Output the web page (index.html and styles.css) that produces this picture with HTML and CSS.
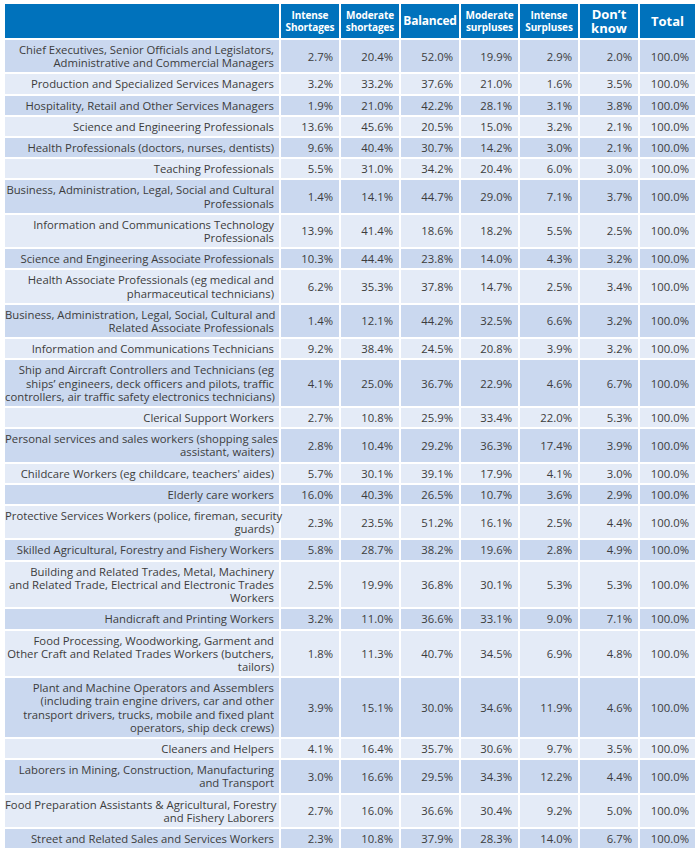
FILE: index.html
```html
<!DOCTYPE html>
<html>
<head>
<meta charset="utf-8">
<link rel="stylesheet" href="styles.css">
</head>
<body>
<table class="grid">
<colgroup>
<col class="c-label"><col class="c58"><col class="c58"><col class="c58"><col class="c57"><col class="c58"><col class="c58"><col class="c55">
</colgroup>
<thead>
<tr>
<th></th>
<th class="small">Intense<br>Shortages</th>
<th class="small">Moderate<br>shortages</th>
<th class="mid">Balanced</th>
<th class="small">Moderate<br>surpluses</th>
<th class="small">Intense<br>Surpluses</th>
<th class="big">Don’t<br>know</th>
<th class="big">Total</th>
</tr>
</thead>
<tbody>
<tr><td>Chief Executives, Senior Officials and Legislators,<br>Administrative and Commercial Managers</td><td>2.7%</td><td>20.4%</td><td>52.0%</td><td>19.9%</td><td>2.9%</td><td>2.0%</td><td>100.0%</td></tr>
<tr><td>Production and Specialized Services Managers</td><td>3.2%</td><td>33.2%</td><td>37.6%</td><td>21.0%</td><td>1.6%</td><td>3.5%</td><td>100.0%</td></tr>
<tr><td>Hospitality, Retail and Other Services Managers</td><td>1.9%</td><td>21.0%</td><td>42.2%</td><td>28.1%</td><td>3.1%</td><td>3.8%</td><td>100.0%</td></tr>
<tr><td>Science and Engineering Professionals</td><td>13.6%</td><td>45.6%</td><td>20.5%</td><td>15.0%</td><td>3.2%</td><td>2.1%</td><td>100.0%</td></tr>
<tr><td>Health Professionals (doctors, nurses, dentists)</td><td>9.6%</td><td>40.4%</td><td>30.7%</td><td>14.2%</td><td>3.0%</td><td>2.1%</td><td>100.0%</td></tr>
<tr><td>Teaching Professionals</td><td>5.5%</td><td>31.0%</td><td>34.2%</td><td>20.4%</td><td>6.0%</td><td>3.0%</td><td>100.0%</td></tr>
<tr><td>Business, Administration, Legal, Social and Cultural<br>Professionals</td><td>1.4%</td><td>14.1%</td><td>44.7%</td><td>29.0%</td><td>7.1%</td><td>3.7%</td><td>100.0%</td></tr>
<tr><td>Information and Communications Technology<br>Professionals</td><td>13.9%</td><td>41.4%</td><td>18.6%</td><td>18.2%</td><td>5.5%</td><td>2.5%</td><td>100.0%</td></tr>
<tr><td>Science and Engineering Associate Professionals</td><td>10.3%</td><td>44.4%</td><td>23.8%</td><td>14.0%</td><td>4.3%</td><td>3.2%</td><td>100.0%</td></tr>
<tr><td>Health Associate Professionals (eg medical and<br>pharmaceutical technicians)</td><td>6.2%</td><td>35.3%</td><td>37.8%</td><td>14.7%</td><td>2.5%</td><td>3.4%</td><td>100.0%</td></tr>
<tr><td>Business, Administration, Legal, Social, Cultural and<br>Related Associate Professionals</td><td>1.4%</td><td>12.1%</td><td>44.2%</td><td>32.5%</td><td>6.6%</td><td>3.2%</td><td>100.0%</td></tr>
<tr><td>Information and Communications Technicians</td><td>9.2%</td><td>38.4%</td><td>24.5%</td><td>20.8%</td><td>3.9%</td><td>3.2%</td><td>100.0%</td></tr>
<tr><td>Ship and Aircraft Controllers and Technicians (eg<br>ships’ engineers, deck officers and pilots, traffic<br>controllers, air traffic safety electronics technicians)</td><td>4.1%</td><td>25.0%</td><td>36.7%</td><td>22.9%</td><td>4.6%</td><td>6.7%</td><td>100.0%</td></tr>
<tr><td>Clerical Support Workers</td><td>2.7%</td><td>10.8%</td><td>25.9%</td><td>33.4%</td><td>22.0%</td><td>5.3%</td><td>100.0%</td></tr>
<tr><td>Personal services and sales workers (shopping sales<br>assistant, waiters)</td><td>2.8%</td><td>10.4%</td><td>29.2%</td><td>36.3%</td><td>17.4%</td><td>3.9%</td><td>100.0%</td></tr>
<tr><td>Childcare Workers (eg childcare, teachers' aides)</td><td>5.7%</td><td>30.1%</td><td>39.1%</td><td>17.9%</td><td>4.1%</td><td>3.0%</td><td>100.0%</td></tr>
<tr><td>Elderly care workers</td><td>16.0%</td><td>40.3%</td><td>26.5%</td><td>10.7%</td><td>3.6%</td><td>2.9%</td><td>100.0%</td></tr>
<tr><td>Protective Services Workers (police, fireman, security<br>guards)</td><td>2.3%</td><td>23.5%</td><td>51.2%</td><td>16.1%</td><td>2.5%</td><td>4.4%</td><td>100.0%</td></tr>
<tr><td>Skilled Agricultural, Forestry and Fishery Workers</td><td>5.8%</td><td>28.7%</td><td>38.2%</td><td>19.6%</td><td>2.8%</td><td>4.9%</td><td>100.0%</td></tr>
<tr><td>Building and Related Trades, Metal, Machinery<br>and Related Trade, Electrical and Electronic Trades<br>Workers</td><td>2.5%</td><td>19.9%</td><td>36.8%</td><td>30.1%</td><td>5.3%</td><td>5.3%</td><td>100.0%</td></tr>
<tr><td>Handicraft and Printing Workers</td><td>3.2%</td><td>11.0%</td><td>36.6%</td><td>33.1%</td><td>9.0%</td><td>7.1%</td><td>100.0%</td></tr>
<tr><td>Food Processing, Woodworking, Garment and<br>Other Craft and Related Trades Workers (butchers,<br>tailors)</td><td>1.8%</td><td>11.3%</td><td>40.7%</td><td>34.5%</td><td>6.9%</td><td>4.8%</td><td>100.0%</td></tr>
<tr><td>Plant and Machine Operators and Assemblers<br>(including train engine drivers, car and other<br>transport drivers, trucks, mobile and fixed plant<br>operators, ship deck crews)</td><td>3.9%</td><td>15.1%</td><td>30.0%</td><td>34.6%</td><td>11.9%</td><td>4.6%</td><td>100.0%</td></tr>
<tr><td>Cleaners and Helpers</td><td>4.1%</td><td>16.4%</td><td>35.7%</td><td>30.6%</td><td>9.7%</td><td>3.5%</td><td>100.0%</td></tr>
<tr><td>Laborers in Mining, Construction, Manufacturing<br>and Transport</td><td>3.0%</td><td>16.6%</td><td>29.5%</td><td>34.3%</td><td>12.2%</td><td>4.4%</td><td>100.0%</td></tr>
<tr><td>Food Preparation Assistants &amp; Agricultural, Forestry<br>and Fishery Laborers</td><td>2.7%</td><td>16.0%</td><td>36.6%</td><td>30.4%</td><td>9.2%</td><td>5.0%</td><td>100.0%</td></tr>
<tr><td>Street and Related Sales and Services Workers</td><td>2.3%</td><td>10.8%</td><td>37.9%</td><td>28.3%</td><td>14.0%</td><td>6.7%</td><td>100.0%</td></tr>
</tbody>
</table>
</body>
</html>
```
FILE: styles.css
```css
html, body {
  margin: 0;
  padding: 0;
  background: #ffffff;
}
body {
  padding: 2px 0 0 3px;
  font-family: "Open Sans", "Noto Sans", sans-serif;
  color: #3c3c3c;
}
.grid {
  table-layout: fixed;
  width: 694px;
  border-collapse: separate;
  border-spacing: 2px;
}
.c-label { width: 274px; }
.c58 { width: 58px; }
.c57 { width: 57px; }
.c55 { width: 55px; }
.grid th {
  background: #0072bc;
  color: #ffffff;
  font-weight: 700;
  text-align: center;
  vertical-align: middle;
  height: 34px;
  padding: 0;
  box-sizing: border-box;
  white-space: nowrap;
}
.grid th.small {
  font-size: 10px;
  line-height: 12px;
  letter-spacing: -0.1px;
}
.grid th.mid {
  font-size: 12px;
  line-height: 14px;
  letter-spacing: -0.2px;
}
.grid th.big {
  font-size: 13px;
  line-height: 14px;
}
.grid td {
  font-size: 11.3px;
  line-height: 13.2px;
  padding: 3px 6px 3px 2px;
  text-align: right;
  vertical-align: middle;
  white-space: nowrap;
  background: #cad8ef;
}
.grid td:first-child {
  padding: 3px 5px 3px 0;
}
.grid tbody tr:nth-child(even) td {
  background: #e4ebf7;
}
```
